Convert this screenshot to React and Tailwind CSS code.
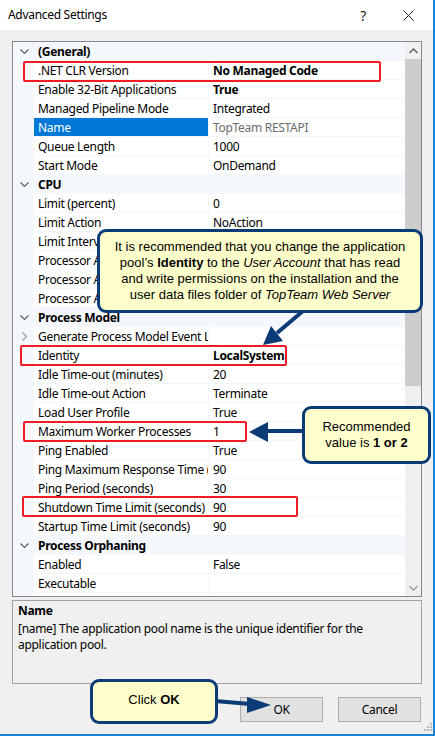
import React from "react";

const groups = [
  {
    title: "(General)",
    rows: [
      { n: ".NET CLR Version", v: "No Managed Code", b: true },
      { n: "Enable 32-Bit Applications", v: "True", b: true },
      { n: "Managed Pipeline Mode", v: "Integrated" },
      { n: "Name", v: "TopTeam RESTAPI", sel: true },
      { n: "Queue Length", v: "1000" },
      { n: "Start Mode", v: "OnDemand" },
    ],
  },
  {
    title: "CPU",
    rows: [
      { n: "Limit (percent)", v: "0" },
      { n: "Limit Action", v: "NoAction" },
      { n: "Limit Interval (minutes)", v: "5" },
      { n: "Processor Affinity Enabled", v: "False" },
      { n: "Processor Affinity Mask", v: "4294967295" },
      { n: "Processor Affinity Mask (64-bit option)", v: "4294967295" },
    ],
  },
  {
    title: "Process Model",
    rows: [
      { n: "Generate Process Model Event Log Entry", v: "", exp: true },
      { n: "Identity", v: "LocalSystem", b: true },
      { n: "Idle Time-out (minutes)", v: "20" },
      { n: "Idle Time-out Action", v: "Terminate" },
      { n: "Load User Profile", v: "True" },
      { n: "Maximum Worker Processes", v: "1" },
      { n: "Ping Enabled", v: "True" },
      { n: "Ping Maximum Response Time (seconds)", v: "90" },
      { n: "Ping Period (seconds)", v: "30" },
      { n: "Shutdown Time Limit (seconds)", v: "90" },
      { n: "Startup Time Limit (seconds)", v: "90" },
    ],
  },
  {
    title: "Process Orphaning",
    rows: [
      { n: "Enabled", v: "False" },
      { n: "Executable", v: "" },
      { n: "Executable Parameters", v: "" },
    ],
  },
];

function ChevronDown() {
  return (
    <svg width="9" height="6" viewBox="0 0 9 6">
      <path d="M0.5 0.5 L4.5 4.5 L8.5 0.5" fill="none" stroke="#5f5f5f" strokeWidth="1.2" />
    </svg>
  );
}

function ChevronRight() {
  return (
    <svg width="6" height="9" viewBox="0 0 6 9">
      <path d="M0.5 0.5 L4.5 4.5 L0.5 8.5" fill="none" stroke="#9a9a9a" strokeWidth="1.2" />
    </svg>
  );
}

function CategoryRow({ title }) {
  return (
    <div className="flex h-[19px] bg-[#f4f7fc] items-center">
      <div className="w-[21px] flex justify-center items-center pl-[2px]">
        <ChevronDown />
      </div>
      <div className="pl-[4px] font-bold text-black whitespace-nowrap">{title}</div>
    </div>
  );
}

function PropRow({ r }) {
  return (
    <div className="flex h-[19px]">
      <div className="w-[21px] shrink-0 bg-[#f4f7fc] flex items-center justify-center pl-[3px]">
        {r.exp ? <ChevronRight /> : null}
      </div>
      <div
        className={
          "w-[174px] shrink-0 pl-[4px] overflow-hidden whitespace-nowrap flex items-center border-b border-[#f4f7fc] " +
          (r.sel ? "bg-[#0078d7] text-white" : "bg-white text-black")
        }
      >
        {r.n}
      </div>
      <div
        className={
          "flex-1 pl-[4px] overflow-hidden whitespace-nowrap flex items-center bg-white border-l border-b border-[#f4f7fc] " +
          (r.sel ? "text-[#6d6d6d]" : "text-black") +
          (r.b ? " font-bold" : "")
        }
      >
        {r.v}
      </div>
    </div>
  );
}

function Callout({ className, children }) {
  return (
    <div
      className={
        "absolute bg-[#ffffcc] border-[3px] border-[#0b3c78] rounded-[9px] flex flex-col items-center justify-center text-center text-black text-[13px] leading-[16px] tracking-normal " +
        className
      }
      style={{ fontFamily: '"Liberation Sans", Arial, sans-serif' }}
    >
      {children}
    </div>
  );
}

export default function App() {
  return (
    <div
      className="relative w-[435px] h-[736px] bg-[#f0f0f0] overflow-hidden border-r-2 border-b-2 border-[#1883d7] text-[12px] text-black tracking-[-0.3px]"
      style={{ fontFamily: '"Segoe UI", "Noto Sans", sans-serif' }}
    >
      {/* Title bar */}
      <div className="h-[30px] bg-white flex items-center pl-[8px] pr-[19px]">
        <div className="flex-1 text-[12px] text-black">Advanced Settings</div>
        <div className="text-[14px] text-[#222] mr-[37px]">?</div>
        <svg width="11" height="11" viewBox="0 0 11 11">
          <path d="M0.5 0.5 L10.5 10.5 M10.5 0.5 L0.5 10.5" stroke="#222" strokeWidth="1" />
        </svg>
      </div>

      {/* Property grid */}
      <div className="mt-[11px] ml-[12px] w-[410px] h-[556px] border border-[#828790] flex bg-white">
        <div className="flex-1 overflow-hidden leading-[19px]">
          {groups.map((g) => (
            <React.Fragment key={g.title}>
              <CategoryRow title={g.title} />
              {g.rows.map((r) => (
                <PropRow key={r.n} r={r} />
              ))}
            </React.Fragment>
          ))}
        </div>
        <div className="w-[16px] bg-[#f0f0f0] flex flex-col">
          <div className="h-[17px] flex items-center justify-center">
            <svg width="9" height="6" viewBox="0 0 9 6">
              <path d="M0.5 5 L4.5 1 L8.5 5" fill="none" stroke="#606060" strokeWidth="1.5" />
            </svg>
          </div>
          <div className="h-[327px] bg-[#cdcdcd]" />
          <div className="flex-1" />
          <div className="h-[17px] flex items-center justify-center">
            <svg width="9" height="6" viewBox="0 0 9 6">
              <path d="M0.5 1 L4.5 5 L8.5 1" fill="none" stroke="#a0a0a0" strokeWidth="1.5" />
            </svg>
          </div>
        </div>
      </div>

      {/* Description */}
      <div className="mt-[3px] ml-[12px] w-[410px] h-[84px] border border-[#a0a0a0] px-[5px] pt-[2px] leading-[16px]">
        <div className="font-bold">Name</div>
        <div className="mt-[2px]">[name] The application pool name is the unique identifier for the application pool.</div>
      </div>

      {/* Buttons */}
      <div className="mt-[13px] flex justify-end gap-[15px] pr-[12px]">
        <button className="w-[83px] h-[25px] bg-[#e1e1e1] border border-[#adadad] text-[12px]">OK</button>
        <button className="w-[83px] h-[25px] bg-[#e1e1e1] border border-[#adadad] text-[12px]">Cancel</button>
      </div>

      {/* Resize grip */}
      <svg className="absolute left-[424px] top-[723px]" width="9" height="9" viewBox="0 0 9 9">
        <rect x="6" y="0" width="2" height="2" fill="#b8b8b8" />
        <rect x="3" y="3" width="2" height="2" fill="#b8b8b8" />
        <rect x="6" y="3" width="2" height="2" fill="#b8b8b8" />
        <rect x="0" y="6" width="2" height="2" fill="#b8b8b8" />
        <rect x="3" y="6" width="2" height="2" fill="#b8b8b8" />
        <rect x="6" y="6" width="2" height="2" fill="#b8b8b8" />
      </svg>

      {/* Red highlight boxes */}
      <div className="absolute left-[23px] top-[61px] w-[358px] h-[21px] border-2 border-[#ee1c25] rounded-[2px]" />
      <div className="absolute left-[20px] top-[345px] w-[267px] h-[21px] border-2 border-[#ee1c25] rounded-[2px]" />
      <div className="absolute left-[23px] top-[421px] w-[224px] h-[21px] border-2 border-[#ee1c25] rounded-[2px]" />
      <div className="absolute left-[22px] top-[496px] w-[276px] h-[21px] border-2 border-[#ee1c25] rounded-[2px]" />

      {/* Arrows */}
      <svg className="absolute left-0 top-0 pointer-events-none" width="435" height="736" viewBox="0 0 435 736">
        <g fill="#0b3c78" stroke="#0b3c78">
          <line x1="303" y1="311" x2="277" y2="333" strokeWidth="4" />
          <polygon points="263,345 271,326 283,341" strokeWidth="0" />
          <line x1="304" y1="431" x2="265" y2="431" strokeWidth="4" />
          <polygon points="249,432 268,422 268,442" strokeWidth="0" />
          <line x1="215" y1="701" x2="250" y2="704" strokeWidth="4" />
          <polygon points="271,705 247,697 247,713" strokeWidth="0" />
        </g>
      </svg>

      {/* Callouts */}
      <Callout className="left-[97px] top-[229px] w-[326px] h-[84px]">
        <div>It is recommended that you change the application</div>
        <div>
          pool’s <b>Identity</b> to the <i>User Account</i> that has read
        </div>
        <div>and write permissions on the installation and the</div>
        <div>
          user data files folder of <i>TopTeam Web Server</i>
        </div>
      </Callout>
      <Callout className="left-[302px] top-[406px] w-[129px] h-[58px]">
        <div>Recommended</div>
        <div>
          value is <b>1 or 2</b>
        </div>
      </Callout>
      <Callout className="left-[90px] top-[679px] w-[128px] h-[45px]">
        <div className="-mt-[3px]">
          Click <b>OK</b>
        </div>
      </Callout>
    </div>
  );
}
